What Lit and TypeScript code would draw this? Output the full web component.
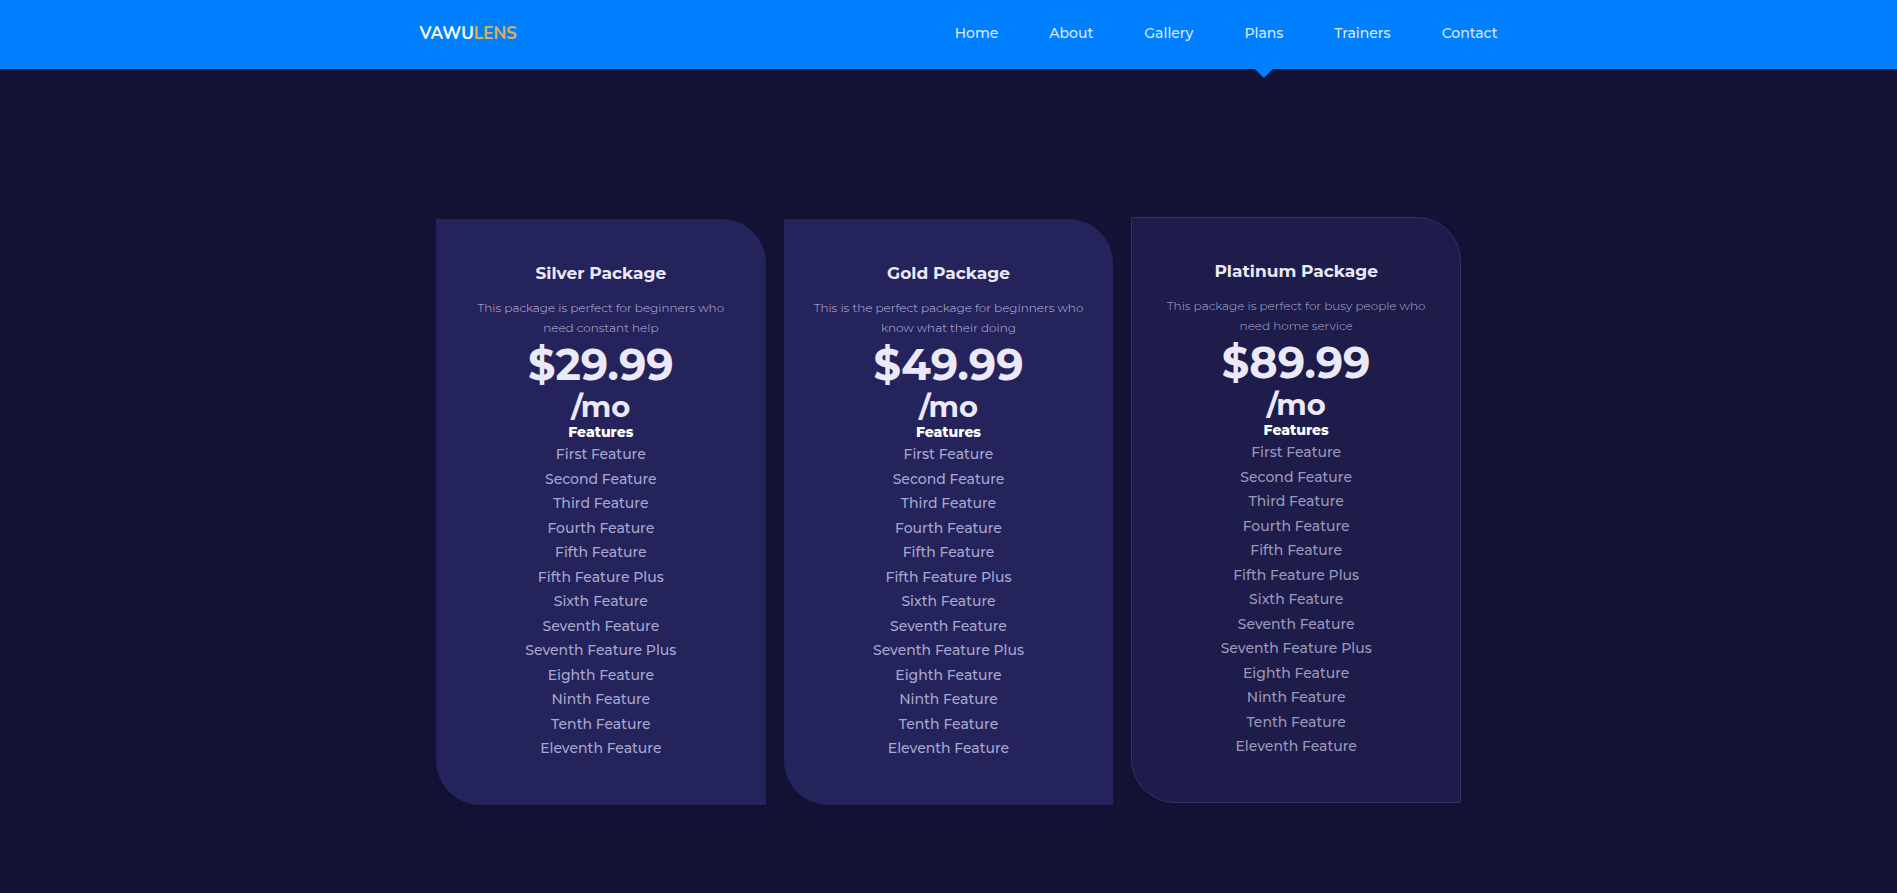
import { LitElement, html, css } from "lit";
import { customElement, property } from "lit/decorators.js";

interface Plan {
  name: string;
  blurb: string;
  price: string;
  active?: boolean;
}

const LINKS = ["Home", "About", "Gallery", "Plans", "Trainers", "Contact"];

const FEATURES = [
  "First Feature",
  "Second Feature",
  "Third Feature",
  "Fourth Feature",
  "Fifth Feature",
  "Fifth Feature Plus",
  "Sixth Feature",
  "Seventh Feature",
  "Seventh Feature Plus",
  "Eighth Feature",
  "Ninth Feature",
  "Tenth Feature",
  "Eleventh Feature",
];

const PLANS: Plan[] = [
  { name: "Silver Package", blurb: "This package is perfect for beginners who need constant help", price: "$29.99" },
  { name: "Gold Package", blurb: "This is the perfect package for beginners who know what their doing", price: "$49.99" },
  { name: "Platinum Package", blurb: "This package is perfect for busy people who need home service", price: "$89.99", active: true },
];

@customElement("plan-card")
class PlanCard extends LitElement {
  @property({ attribute: false }) plan!: Plan;

  static styles = css`
    :host {
      display: block;
    }
    .card {
      box-sizing: border-box;
      display: flex;
      flex-direction: column;
      height: 100%;
      min-height: 586px;
      padding: 40px 24px 44px;
      border: 1px solid #24235b;
      border-radius: 0 44px 0 44px;
      background: #24235b;
      box-shadow: 0 3px 6px rgba(0, 0, 0, 0.1);
      text-align: center;
      color: #ebe9f8;
    }
    .active {
      background: #1d1c4b;
      border-color: #35325f;
      transform: translateY(-2px);
    }
    h2,
    h3,
    p,
    ul {
      margin: 0;
      padding: 0;
    }
    h2 {
      font-size: 17px;
      line-height: 26px;
      font-weight: 700;
    }
    .blurb {
      margin-top: 12px;
      font-size: 12px;
      line-height: 20px;
      font-weight: 300;
      color: #c0bee2;
    }
    .price {
      display: flex;
      flex-direction: column;
      font-weight: 700;
    }
    .amount {
      font-size: 43px;
      line-height: 54px;
    }
    .period {
      font-size: 29px;
      line-height: 30px;
    }
    h3 {
      font-size: 14px;
      line-height: 20px;
      font-weight: 800;
      color: #fff;
    }
    ul {
      flex: 1;
      display: flex;
      flex-direction: column;
      justify-content: space-between;
      list-style: none;
      font-size: 14px;
      line-height: 24px;
      font-weight: 500;
      color: #a9a7ce;
    }
    .active .blurb {
      color: #b3b1cf;
    }
    .active ul {
      color: #9b99ba;
    }
  `;

  render() {
    const { name, blurb, price, active } = this.plan;
    return html`
      <article class="card ${active ? "active" : ""}">
        <h2>${name}</h2>
        <p class="blurb">${blurb}</p>
        <p class="price"><span class="amount">${price}</span><span class="period">/mo</span></p>
        <h3>Features</h3>
        <ul>
          ${FEATURES.map((f) => html`<li>${f}</li>`)}
        </ul>
      </article>
    `;
  }
}

@customElement("app-root")
class AppRoot extends LitElement {
  static styles = css`
    :host {
      display: block;
      min-height: 100vh;
      background: #141336;
      font-family: Montserrat, Inter, "Open Sans", sans-serif;
    }
    .header {
      background: #0080ff;
    }
    .bar {
      box-sizing: border-box;
      display: flex;
      align-items: center;
      justify-content: space-between;
      max-width: 1098px;
      min-height: 69px;
      margin: 0 auto;
      padding-left: 20px;
    }
    .logo {
      font-family: Nunito, Lato, sans-serif;
      font-size: 17px;
      line-height: 24px;
      font-weight: 700;
      text-decoration: none;
      color: #fff;
      margin-bottom: 2px;
    }
    .logo span {
      color: #e0b04a;
    }
    .links {
      display: flex;
      align-self: stretch;
      gap: 51px;
    }
    .link {
      position: relative;
      display: flex;
      align-items: center;
      padding-bottom: 4px;
      font-size: 14px;
      line-height: 20px;
      font-weight: 500;
      text-decoration: none;
      color: #dbe8fb;
    }
    .current::after {
      content: "";
      position: absolute;
      top: 100%;
      left: 50%;
      width: 18px;
      height: 9px;
      margin-left: -9px;
      background: #0080ff;
      clip-path: polygon(0 0, 100% 0, 50% 100%);
    }
    .plans {
      display: grid;
      grid-template-columns: repeat(3, 1fr);
      gap: 18px;
      max-width: 1025px;
      margin: 0 auto;
      padding: 150px 0 83px;
    }
  `;

  render() {
    return html`
      <header class="header">
        <div class="bar">
          <a class="logo" href="#home">VAWU<span>LENS</span></a>
          <nav class="links">
            ${LINKS.map(
              (l) => html`<a class="link ${l === "Plans" ? "current" : ""}" href="#${l.toLowerCase()}">${l}</a>`
            )}
          </nav>
        </div>
      </header>
      <main class="plans">${PLANS.map((p) => html`<plan-card .plan=${p}></plan-card>`)}</main>
    `;
  }
}
